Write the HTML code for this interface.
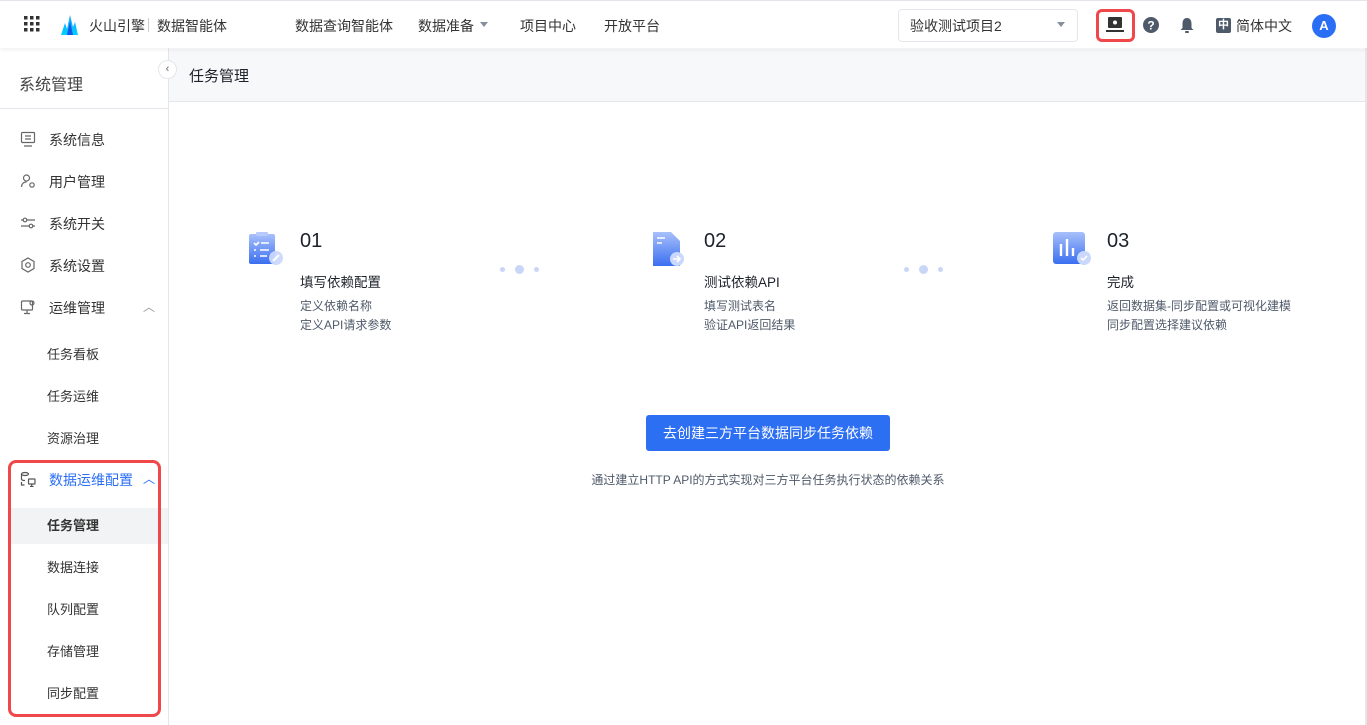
<!DOCTYPE html>
<html><head><meta charset="utf-8"><style>
*{margin:0;padding:0;box-sizing:border-box}
body{width:1367px;height:725px;overflow:hidden;background:#fff;font-family:"Liberation Sans","Noto Sans CJK SC",sans-serif;color:#1d2129;position:relative}
.a{position:absolute;white-space:nowrap}
.top{position:absolute;left:0;top:0;width:1367px;height:48px;background:#fff;border-top:1px solid #e5e6eb;box-shadow:0 2px 4px rgba(0,0,0,.06);z-index:2}
.side{position:absolute;left:0;top:48px;width:169px;height:677px;background:#fff;border-right:1px solid #e5e6eb}
.hd{position:absolute;left:169px;top:49px;width:1197px;height:53px;background:#f7f8fa;border-bottom:1px solid #e5e6eb}
.mi{position:absolute;left:49px;font-size:14px;color:#333}
.si{position:absolute;left:47px;font-size:13px;color:#333}
.ic{position:absolute;left:20px;width:16px;height:16px}
.num{font-size:20px;color:#1d2129}
.t{font-size:13.5px;color:#1d2129}
.d{font-size:12px;color:#4e5969;line-height:19px}
.dot{position:absolute;border-radius:50%;background:#c9d6f8}
</style></head><body>
<div class="top">
<svg class="a" style="left:24px;top:15px" width="16" height="16" viewBox="0 0 16 16" fill="#333"><g><rect x="0" y="0" width="3.5" height="3.5"/><rect x="6" y="0" width="3.5" height="3.5"/><rect x="12" y="0" width="3.5" height="3.5"/><rect x="0" y="6" width="3.5" height="3.5"/><rect x="6" y="6" width="3.5" height="3.5"/><rect x="12" y="6" width="3.5" height="3.5"/><rect x="0" y="12" width="3.5" height="3.5"/><rect x="6" y="12" width="3.5" height="3.5"/><rect x="12" y="12" width="3.5" height="3.5"/></g></svg>
<svg class="a" style="left:61px;top:14px" width="17" height="20" viewBox="0 0 17 20"><defs><linearGradient id="lg" x1="0" y1="0" x2="0" y2="1"><stop offset="0" stop-color="#1aa4ff"/><stop offset="1" stop-color="#00d0ff"/></linearGradient></defs><path d="M0 20 L4 8 L6 14 L9 0 L12 12 L14 7 L17 20Z" fill="url(#lg)"/><path d="M6 20 L9 6 L12 20Z" fill="#1657e8"/></svg>
<div class="a" style="left:89px;top:15px;font-size:14px;color:#333">火山引擎</div>
<div class="a" style="left:148px;top:17px;width:1px;height:14px;background:#c9cdd4"></div>
<div class="a" style="left:157px;top:15px;font-size:14px;color:#333">数据智能体</div>
<div class="a" style="left:295px;top:15px;font-size:14px;color:#333">数据查询智能体</div>
<div class="a" style="left:418px;top:15px;font-size:14px;color:#333">数据准备</div>
<div class="a" style="left:480px;top:21px;border:4px solid transparent;border-top:5px solid #86909c"></div>
<div class="a" style="left:520px;top:15px;font-size:14px;color:#333">项目中心</div>
<div class="a" style="left:604px;top:15px;font-size:14px;color:#333">开放平台</div>
<div class="a" style="left:898px;top:8px;width:180px;height:33px;border:1px solid #e5e6eb;border-radius:4px"></div>
<div class="a" style="left:910px;top:15px;font-size:14px;color:#333">验收测试项目2</div>
<div class="a" style="left:1057px;top:21px;border:4px solid transparent;border-top:5px solid #86909c"></div>
<div class="a" style="left:1096px;top:8px;width:39px;height:33px;border:3px solid #f0484a;border-radius:6px"></div>
<svg class="a" style="left:1106px;top:16px" width="18" height="16" viewBox="0 0 18 16"><rect x="2" y="0" width="14" height="11" rx="1" fill="#333"/><circle cx="9" cy="5.5" r="2" fill="#fff"/><rect x="0" y="13" width="18" height="2" fill="#333"/></svg>
<svg class="a" style="left:1143px;top:16px" width="16" height="16" viewBox="0 0 16 16"><circle cx="8" cy="8" r="8" fill="#4e5969"/><text x="8" y="12.5" font-size="12" font-weight="bold" fill="#fff" text-anchor="middle" font-family="Liberation Sans">?</text></svg>
<svg class="a" style="left:1180px;top:16px" width="14" height="16" viewBox="0 0 14 16"><path d="M7 1 C3.5 1 2.5 4 2.5 7 L2.5 11 L0.5 13 L13.5 13 L11.5 11 L11.5 7 C11.5 4 10.5 1 7 1Z" fill="#4e5969"/><rect x="5" y="14" width="4" height="2" rx="1" fill="#4e5969"/></svg>
<div class="a" style="left:1216px;top:17px;width:15px;height:15px;background:#4e5969;border-radius:2px;color:#fff;font-size:11px;text-align:center;line-height:15px;font-weight:bold">中</div>
<div class="a" style="left:1236px;top:15px;font-size:14px;color:#333">简体中文</div>
<div class="a" style="left:1312px;top:13px;width:24px;height:24px;border-radius:50%;background:#2a6ef5;color:#fff;font-size:13px;font-weight:bold;text-align:center;line-height:24px">A</div>
</div>

<div class="side">
<div class="a" style="left:19px;top:23px;font-size:16px;color:#444">系统管理</div>
<div class="a" style="left:0;top:60px;width:168px;height:1px;background:#e5e6eb"></div>
</div>
<div class="a" style="left:158px;top:60px;width:19px;height:19px;border-radius:50%;background:#fff;border:1px solid #e5e6eb;font-size:11px;color:#666;text-align:center;line-height:17px;z-index:3">‹</div>
<svg class="ic" style="top:131px" viewBox="0 0 16 16" fill="none" stroke="#666" stroke-width="1.2"><rect x="1.5" y="1.5" width="13" height="10" rx="1"/><path d="M4 15h8M5 5h6M5 8h6"/></svg>
<div class="mi" style="top:130px">系统信息</div>
<svg class="ic" style="top:173px" viewBox="0 0 16 16" fill="none" stroke="#666" stroke-width="1.2"><circle cx="6.5" cy="5" r="3"/><path d="M1.5 14c0-3 2-5 5-5"/><circle cx="12" cy="12" r="2.2"/></svg>
<div class="mi" style="top:172px">用户管理</div>
<svg class="ic" style="top:215px" viewBox="0 0 16 16" fill="none" stroke="#666" stroke-width="1.2"><path d="M1 5h14M1 11h14"/><circle cx="5" cy="5" r="1.8" fill="#fff"/><circle cx="11" cy="11" r="1.8" fill="#fff"/></svg>
<div class="mi" style="top:214px">系统开关</div>
<svg class="ic" style="top:257px" viewBox="0 0 16 16" fill="none" stroke="#666" stroke-width="1.2"><path d="M8 1l6 3.5v7L8 15l-6-3.5v-7z"/><circle cx="8" cy="8" r="2.3"/></svg>
<div class="mi" style="top:256px">系统设置</div>
<svg class="ic" style="top:299px" viewBox="0 0 16 16" fill="none" stroke="#666" stroke-width="1.2"><rect x="1.5" y="2" width="11" height="9" rx="1"/><path d="M7 11v3M4 14.5h6"/><circle cx="12" cy="4" r="2"/></svg>
<div class="mi" style="top:298px">运维管理</div>
<div class="a" style="left:143px;top:298px;font-size:12px;color:#999">︿</div>
<div class="si" style="top:344px">任务看板</div>
<div class="si" style="top:386px">任务运维</div>
<div class="si" style="top:428px">资源治理</div>
<div class="a" style="left:8px;top:460px;width:153px;height:257px;border:3px solid #f0484a;border-radius:8px;z-index:1"></div>
<svg class="ic" style="top:471px" viewBox="0 0 16 16" fill="none" stroke="#555" stroke-width="1.2"><ellipse cx="5" cy="3" rx="3.5" ry="1.5"/><path d="M1.5 3v5c0 1 1.5 1.5 3.5 1.5"/><rect x="8.5" y="8" width="6.5" height="5" rx=".5"/><path d="M11.7 13v2M10 15.5h3.5M1.5 11v3h3"/></svg>
<div class="mi" style="top:470px;color:#2a6ef5">数据运维配置</div>
<div class="a" style="left:143px;top:470px;font-size:12px;color:#2a6ef5">︿</div>
<div class="a" style="left:11px;top:508px;width:157px;height:36px;background:#f2f3f5"></div>
<div class="si" style="top:515px;font-weight:bold">任务管理</div>
<div class="si" style="top:557px">数据连接</div>
<div class="si" style="top:599px">队列配置</div>
<div class="si" style="top:641px">存储管理</div>
<div class="si" style="top:683px">同步配置</div>

<div class="hd"><div class="a" style="left:20px;top:16px;font-size:15px;color:#1d2129">任务管理</div></div>
<div class="a" style="left:1365px;top:48px;width:2px;height:677px;background:#e5e6eb"></div>

<svg class="a" style="left:248px;top:230px" width="38" height="38" viewBox="0 0 38 38"><defs><linearGradient id="g1" x1="0" y1="0" x2="0" y2="1"><stop offset="0" stop-color="#a8c0fb"/><stop offset="1" stop-color="#3b6ff0"/></linearGradient></defs><rect x="1" y="4" width="26" height="30" rx="2" fill="url(#g1)"/><rect x="8" y="2" width="12" height="4" rx="1" fill="#b7cafb"/><path d="M6 13l2 2 3-3M13 13h8M6 20h2M12 20h9M6 26h2M12 26h7" stroke="#fff" stroke-width="1.6" fill="none"/><circle cx="28" cy="28" r="7" fill="#c9d8fc" opacity=".95"/><path d="M25 31l6-6" stroke="#fff" stroke-width="2"/></svg>
<div class="a num" style="left:300px;top:230px">01</div>
<div class="a t" style="left:300px;top:271px">填写依赖配置</div>
<div class="a d" style="left:300px;top:297px">定义依赖名称<br>定义API请求参数</div>
<div class="dot" style="left:500px;top:267px;width:5px;height:5px"></div>
<div class="dot" style="left:515px;top:265px;width:9px;height:9px"></div>
<div class="dot" style="left:534px;top:267px;width:5px;height:5px"></div>

<svg class="a" style="left:652px;top:230px" width="38" height="38" viewBox="0 0 38 38"><defs><linearGradient id="g2" x1="0" y1="0" x2="0" y2="1"><stop offset="0" stop-color="#a8c0fb"/><stop offset="1" stop-color="#3b6ff0"/></linearGradient></defs><path d="M1 2h18l9 9v25H1z" fill="url(#g2)"/><path d="M5 8h8M5 13h5" stroke="#fff" stroke-width="1.6"/><circle cx="25" cy="29" r="7" fill="#c9d8fc"/><path d="M21 29h7M25 26l3 3-3 3" stroke="#fff" stroke-width="1.6" fill="none"/></svg>
<div class="a num" style="left:704px;top:230px">02</div>
<div class="a t" style="left:704px;top:271px">测试依赖API</div>
<div class="a d" style="left:704px;top:297px">填写测试表名<br>验证API返回结果</div>
<div class="dot" style="left:904px;top:267px;width:5px;height:5px"></div>
<div class="dot" style="left:919px;top:265px;width:9px;height:9px"></div>
<div class="dot" style="left:938px;top:267px;width:5px;height:5px"></div>

<svg class="a" style="left:1052px;top:230px" width="40" height="38" viewBox="0 0 40 38"><defs><linearGradient id="g3" x1="0" y1="0" x2="0" y2="1"><stop offset="0" stop-color="#a8c0fb"/><stop offset="1" stop-color="#3b6ff0"/></linearGradient></defs><rect x="1" y="2" width="32" height="32" rx="3" fill="url(#g3)"/><path d="M9 14v12M15 9v17M21 18v8" stroke="#fff" stroke-width="2.4"/><circle cx="32" cy="28" r="7" fill="#c9d8fc"/><path d="M29 28l2 2 4-4" stroke="#fff" stroke-width="1.6" fill="none"/></svg>
<div class="a num" style="left:1107px;top:230px">03</div>
<div class="a t" style="left:1107px;top:271px">完成</div>
<div class="a d" style="left:1107px;top:297px">返回数据集-同步配置或可视化建模<br>同步配置选择建议依赖</div>

<div class="a" style="left:646px;top:415px;width:244px;height:36px;background:#2d6ff2;border-radius:3px;color:#fff;font-size:14px;text-align:center;line-height:36px">去创建三方平台数据同步任务依赖</div>
<div class="a" style="left:0;width:1536px;top:471px;text-align:center;font-size:12px;color:#4e5969">通过建立HTTP API的方式实现对三方平台任务执行状态的依赖关系</div>
</body></html>
